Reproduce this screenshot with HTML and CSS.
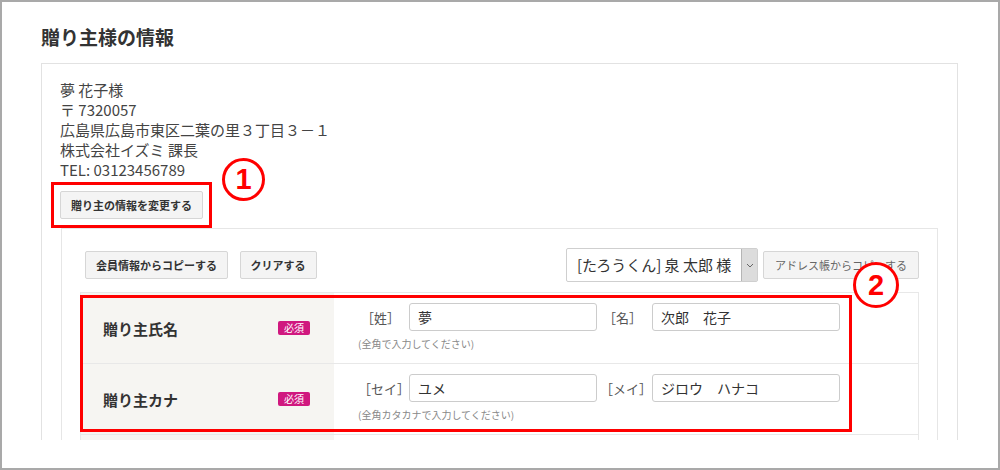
FILE: index.html
```html
<!DOCTYPE html>
<html>
<head lang="ja">
    <meta charset="UTF-8">
    <title>贈り主様の情報</title>
    <link rel="stylesheet" href="styles.css">
</head>
<body>
<div class="frame">
    <div class="page">
        <h2 class="title">贈り主様の情報</h2>
        <div class="sender-box">
            <div class="address">
                <p>夢 花子様</p>
                <p>〒 7320057</p>
                <p>広島県広島市東区二葉の里３丁目３－１</p>
                <p>株式会社イズミ 課長</p>
                <p>TEL: 03123456789</p>
            </div>
            <div class="change-wrap">
                <a class="btn btn-bold" href="javascript:void(0)">贈り主の情報を変更する</a>
                <span class="mark-box"></span>
                <span class="mark mark-1">1</span>
            </div>
            <div class="form-box">
                <div class="toolbar">
                    <div class="toolbar-left">
                        <a class="btn btn-bold" href="javascript:void(0)">会員情報からコピーする</a>
                        <a class="btn btn-bold" href="javascript:void(0)">クリアする</a>
                    </div>
                    <div class="toolbar-right">
                        <div class="select">
                            <span class="select-text">[たろうくん] 泉 太郎 様</span>
                            <span class="select-arrow">
                                <svg width="8" height="5" viewBox="0 0 8 5"><path d="M1 1 L4 4 L7 1" fill="none" stroke="#666" stroke-width="1"/></svg>
                            </span>
                        </div>
                        <a class="btn btn-light" href="javascript:void(0)">アドレス帳からコピーする</a>
                    </div>
                </div>
                <div class="form-table">
                    <div class="form-row">
                        <div class="form-head">
                            <span class="head-label">贈り主氏名</span>
                            <span class="required">必須</span>
                        </div>
                        <div class="form-body">
                            <div class="field-line">
                                <span class="field-label">［姓］</span>
                                <input class="field-input" type="text" value="夢">
                                <span class="field-label second">［名］</span>
                                <input class="field-input second" type="text" value="次郎　花子">
                            </div>
                            <p class="hint">(全角で入力してください)</p>
                        </div>
                    </div>
                    <div class="form-row">
                        <div class="form-head">
                            <span class="head-label">贈り主カナ</span>
                            <span class="required">必須</span>
                        </div>
                        <div class="form-body">
                            <div class="field-line">
                                <span class="field-label">［セイ］</span>
                                <input class="field-input" type="text" value="ユメ">
                                <span class="field-label second">［メイ］</span>
                                <input class="field-input second" type="text" value="ジロウ　ハナコ">
                            </div>
                            <p class="hint">(全角カタカナで入力してください)</p>
                        </div>
                    </div>
                    <div class="form-row">
                        <div class="form-head"></div>
                        <div class="form-body"></div>
                    </div>
                    <span class="mark-area"></span>
                    <span class="mark mark-2">2</span>
                </div>
            </div>
        </div>
    </div>
</div>
</body>
</html>
```

FILE: styles.css
```css
body{
    margin: 0;
    font-family: "Noto Sans CJK JP", "Noto Sans", sans-serif;
    color: #333;
    background: #fff;
}
.frame{
    width: 1000px;
    height: 470px;
    box-sizing: border-box;
    border: 2px solid #a9a9a9;
    background: #fff;
}
.page{
    height: 438px;
    overflow: hidden;
    box-sizing: border-box;
    padding: 23px 40px 0 39px;
}
.title{
    margin: 0 0 14px 0;
    font-size: 19px;
    line-height: 24px;
    font-weight: bold;
    color: #333;
}

/* sender box */
.sender-box{
    border: 1px solid #e2e2e2;
    padding: 16px 19px 0 18px;
}
.address p{
    margin: 0;
    font-size: 15px;
    line-height: 20px;
    color: #444;
}
.change-wrap{
    position: relative;
    display: inline-block;
    margin-top: 11px;
    vertical-align: top;
}

/* buttons */
.btn{
    display: inline-block;
    box-sizing: border-box;
    height: 28px;
    line-height: 26px;
    padding: 0 10px;
    font-size: 11px;
    color: #333;
    text-decoration: none;
    background: #f4f4f4;
    border: 1px solid #d6d6d6;
    border-radius: 2px;
    vertical-align: top;
}
.btn-bold{
    font-weight: bold;
}
.btn-light{
    color: #666;
    padding: 0 11px;
}

/* form box */
.form-box{
    margin: 9px 0 0 1px;
    border: 1px solid #e6e6e6;
    padding: 19px 18px 0 18px;
}
.toolbar{
    display: flex;
    justify-content: space-between;
    align-items: center;
    padding-left: 5px;
}
.toolbar-left .btn + .btn{
    margin-left: 8px;
}
.toolbar-right{
    display: flex;
    align-items: center;
}
.select{
    display: flex;
    box-sizing: border-box;
    width: 192px;
    height: 34px;
    border: 1px solid #cfcfcf;
    border-radius: 2px;
    background: #fff;
    margin-right: 5px;
}
.select-text{
    flex: 1;
    padding-left: 10px;
    font-size: 15px;
    line-height: 32px;
    color: #333;
    white-space: nowrap;
}
.select-arrow{
    width: 15px;
    display: flex;
    align-items: center;
    justify-content: center;
    background: #dcdcdc;
    border-left: 1px solid #b5b5b5;
}

/* table */
.form-table{
    position: relative;
    margin-top: 10px;
    border: 1px solid #e8e8e8;
    border-bottom: none;
}
.form-row{
    display: flex;
    height: 70px;
    border-bottom: 1px solid #e8e8e8;
}
.form-row:last-of-type{
    border-bottom: none;
}
.form-head{
    display: flex;
    justify-content: space-between;
    align-items: center;
    width: 253px;
    box-sizing: border-box;
    padding: 0 24px 0 22px;
    background: #f6f5f2;
}
.head-label{
    font-size: 15px;
    font-weight: bold;
    color: #333;
}
.required{
    width: 32px;
    height: 14px;
    line-height: 14px;
    text-align: center;
    font-size: 10px;
    color: #fff;
    background: #d0187f;
    border-radius: 2px;
}
.form-body{
    flex: 1;
    padding: 10px 0 0 24px;
}
.field-line{
    display: flex;
    align-items: center;
}
.field-label{
    width: 45px;
    text-align: center;
    font-size: 13px;
    color: #555;
    white-space: nowrap;
}
.field-label.second{
    margin-left: 3px;
}
.field-input{
    box-sizing: border-box;
    width: 188px;
    height: 28px;
    margin-left: 6px;
    padding: 0 8px;
    border: 1px solid #cccccc;
    border-radius: 3px;
    font-family: "Noto Sans CJK JP", sans-serif;
    font-size: 14px;
    color: #333;
    background: #fff;
}
.field-input.second{
    margin-left: 7px;
}
.hint{
    margin: 6px 0 0 0;
    font-size: 10px;
    line-height: 14px;
    color: #888;
}

/* red annotations */
.mark-box{
    position: absolute;
    left: -9px;
    top: -9px;
    right: -9px;
    bottom: -9px;
    border: 3px solid #f00;
}
.mark-area{
    position: absolute;
    left: -1px;
    top: 2px;
    width: 772px;
    height: 137px;
    box-sizing: border-box;
    border: 3px solid #f00;
}
.mark{
    position: absolute;
    display: flex;
    align-items: center;
    justify-content: center;
    box-sizing: border-box;
    border: 3px solid #f00;
    border-radius: 50%;
    background: #fff;
    color: #f00;
    font-family: "Liberation Sans", sans-serif;
    font-weight: bold;
    font-size: 29px;
}
.mark-1{
    left: 162px;
    top: -33px;
    width: 43px;
    height: 43px;
}
.mark-2{
    left: 772px;
    top: -31px;
    width: 46px;
    height: 46px;
}
```
